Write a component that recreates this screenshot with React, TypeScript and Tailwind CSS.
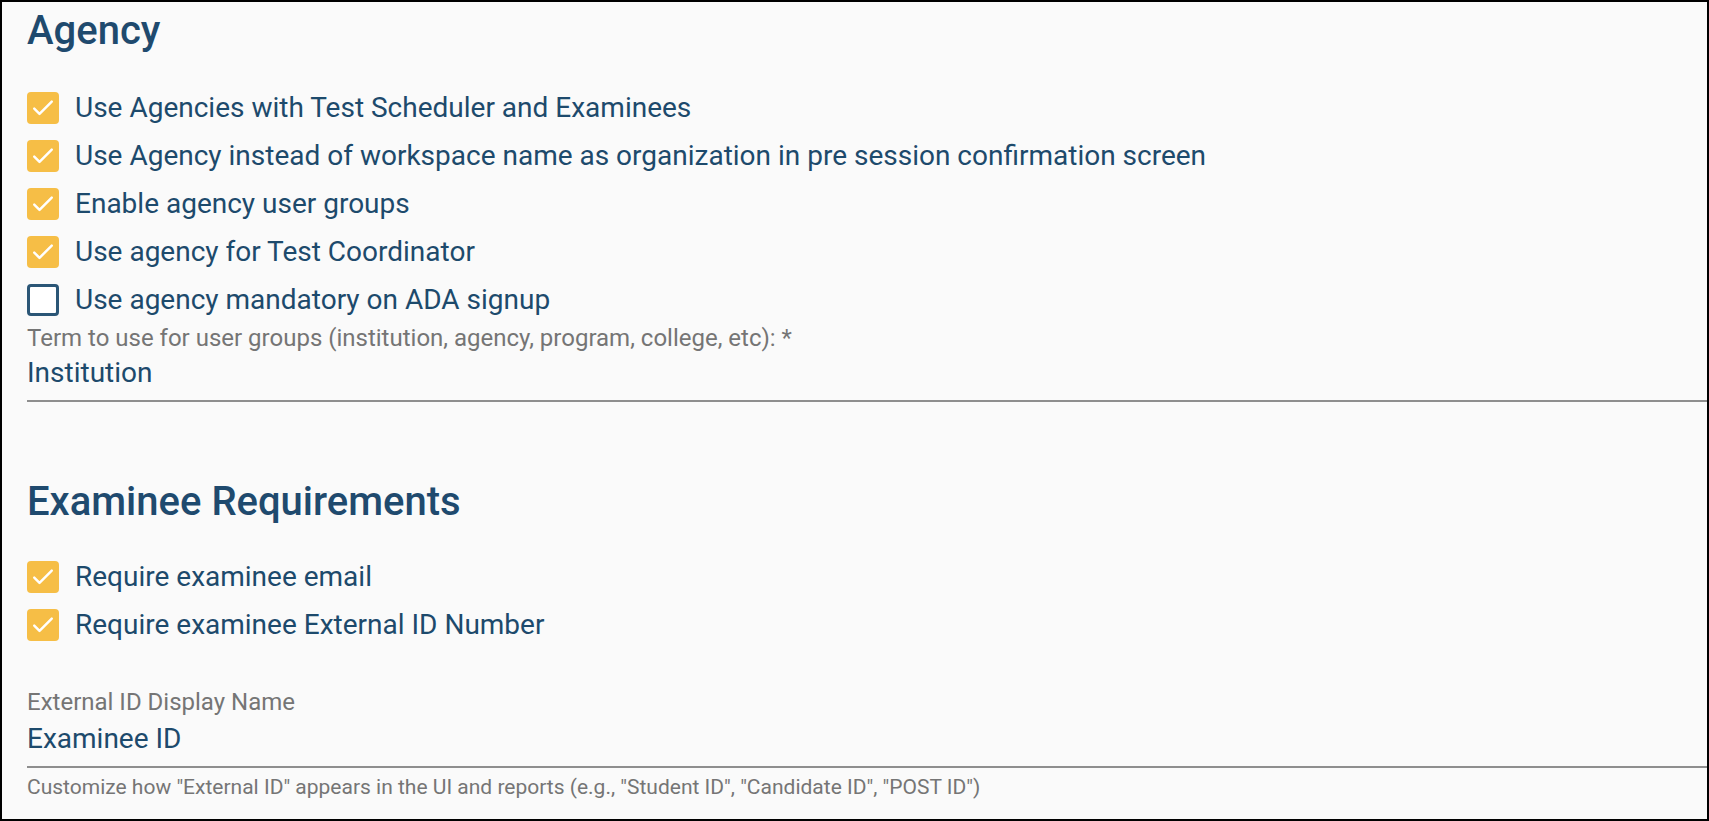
import React from "react"

const Check = ({ checked }: { checked: boolean }) =>
  checked ? (
    <span className="flex h-[32px] w-[32px] shrink-0 items-center justify-center rounded-[4px] bg-[#f6be46]">
      <svg className="h-[28px] w-[28px]" viewBox="0 0 24 24" fill="none" stroke="white" strokeWidth={2.1} strokeLinecap="round" strokeLinejoin="round">
        <path d="M4.5 12.5l4.5 4.5L19.5 6.5" />
      </svg>
    </span>
  ) : (
    <span className="h-[32px] w-[32px] shrink-0 rounded-[4px] border-[3px] border-[#2b5676] bg-white" />
  )

const Row = ({ label, checked = true }: { label: string; checked?: boolean }) => (
  <div className="flex h-[48px] items-center gap-[16px]">
    <Check checked={checked} />
    <span className="text-[28px] text-[#1d4a6c]">{label}</span>
  </div>
)

export default function App() {
  return (
    <div className="h-[821px] w-[1709px] overflow-hidden border-2 border-black bg-[#fafafa] pl-[25px] pt-[5px]" style={{ fontFamily: "Roboto, 'Liberation Sans', sans-serif" }}>
      {/* Agency */}
      <h2 className="h-[48px] text-[40px] font-medium leading-[48px] text-[#1f4a6e]">Agency</h2>
      <div className="mt-[29px]">
        <Row label="Use Agencies with Test Scheduler and Examinees" />
        <Row label="Use Agency instead of workspace name as organization in pre session confirmation screen" />
        <Row label="Enable agency user groups" />
        <Row label="Use agency for Test Coordinator" />
        <Row label="Use agency mandatory on ADA signup" checked={false} />
      </div>
      <div className="border-b-2 border-[#8e8e8e] pb-[11px]">
        <div className="mt-[2px] text-[24px] leading-[24px] text-[#757575]">
          Term to use for user groups (institution, agency, program, college, etc): *
        </div>
        <div className="mt-[7px] text-[28px] leading-[32px] text-[#1d4a6c]">Institution</div>
      </div>

      {/* Examinee Requirements */}
      <h2 className="mt-[76px] h-[48px] text-[40px] font-medium leading-[48px] text-[#1f4a6e]">Examinee Requirements</h2>
      <div className="mt-[27px]">
        <Row label="Require examinee email" />
        <Row label="Require examinee External ID Number" />
      </div>
      <div className="border-b-2 border-[#8e8e8e] pb-[11px]">
        <div className="mt-[41px] text-[24px] leading-[24px] text-[#757575]">External ID Display Name</div>
        <div className="mt-[9px] text-[28px] leading-[32px] text-[#1d4a6c]">Examinee ID</div>
      </div>
      <div className="mt-[7px] text-[21px] leading-[24px] text-[#757575]">
        Customize how "External ID" appears in the UI and reports (e.g., "Student ID", "Candidate ID", "POST ID")
      </div>
    </div>
  )
}
